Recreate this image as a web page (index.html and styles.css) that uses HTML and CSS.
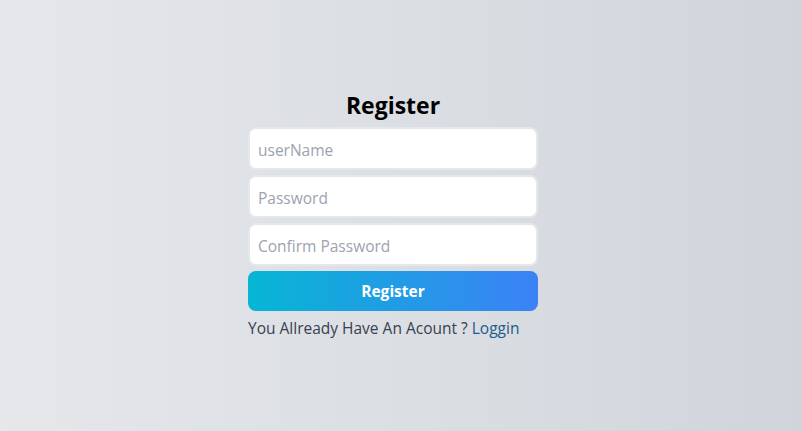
FILE: index.html
```html
<!DOCTYPE html>
<html>
<head>
<meta charset="utf-8">
<link rel="stylesheet" href="styles.css">
</head>
<body>
<main class="page">
  <form class="form">
    <h1 class="title">Register</h1>
    <input class="field" type="text" placeholder="userName">
    <input class="field" type="password" placeholder="Password">
    <input class="field" type="password" placeholder="Confirm Password">
    <button class="btn" type="button">Register</button>
    <p class="note">You Allready Have An Acount ? <a class="link" href="#">Loggin</a></p>
  </form>
</main>
</body>
</html>
```
FILE: styles.css
```css
* { box-sizing: border-box; }
html, body { margin: 0; height: 100%; }
body {
  font-family: "Open Sans", "Noto Sans", sans-serif;
  background: linear-gradient(to right, #e5e7eb, #d1d5db);
}
.page {
  height: 431px;
  display: flex;
  align-items: center;
  justify-content: center;
  padding-right: 16px;
}
.form {
  width: 290px;
  display: flex;
  flex-direction: column;
  gap: 5px;
  margin-top: -3px;
}
.title {
  margin: 0 0 1px;
  text-align: center;
  font-size: 23px;
  font-weight: 700;
  color: #000;
  line-height: 32px;
}
.field {
  height: 43px;
  border: 2px solid #e5e7eb;
  border-radius: 8px;
  background: #fff;
  padding: 3px 8px 0;
  font-family: inherit;
  font-size: 15.5px;
  color: #374151;
  outline: none;
}
.field::placeholder { color: #9ca3af; }
.btn {
  height: 40px;
  border: none;
  border-radius: 8px;
  background: linear-gradient(to right, #06b6d4, #3b82f6);
  color: #fff;
  font-family: inherit;
  font-weight: 700;
  font-size: 15.5px;
  cursor: pointer;
}
.note {
  margin: 0;
  font-size: 15.5px;
  line-height: 24px;
  color: #374151;
}
.link {
  color: #1e5a8c;
  text-decoration: none;
}
```
